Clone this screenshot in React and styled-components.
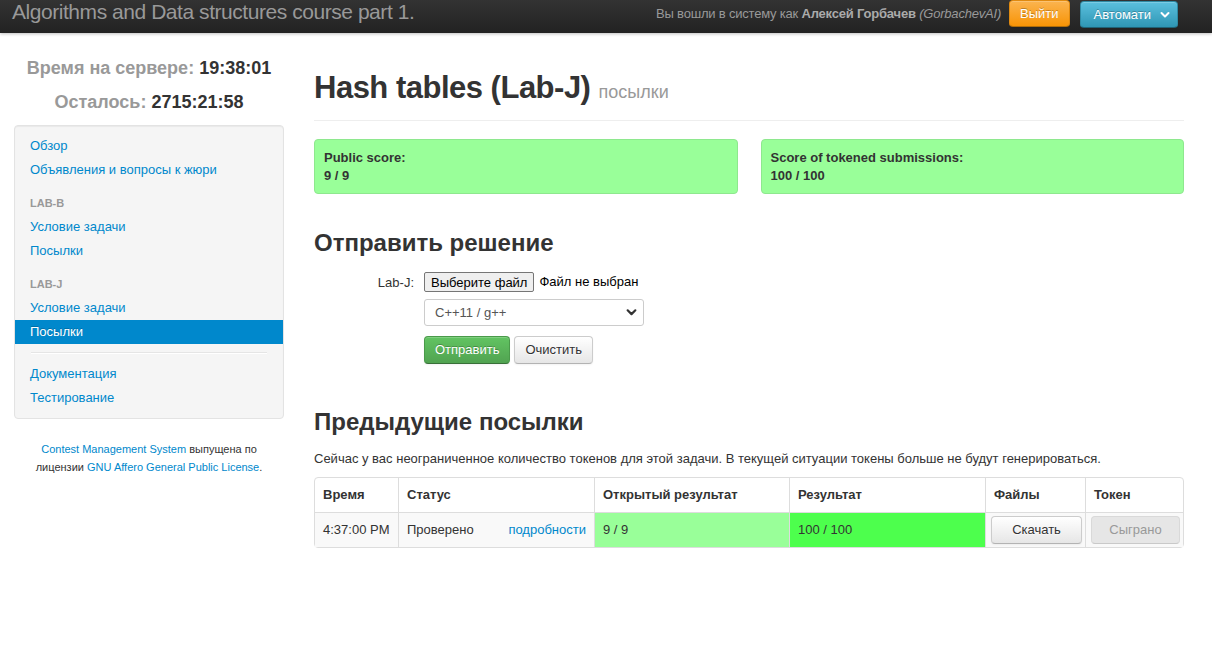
import styled, { createGlobalStyle, css } from "styled-components";

// Data
const menu = [
  { type: "link", name: "Обзор" },
  { type: "link", name: "Объявления и вопросы к жюри" },
  { type: "header", name: "LAB-B" },
  { type: "link", name: "Условие задачи" },
  { type: "link", name: "Посылки" },
  { type: "header", name: "LAB-J" },
  { type: "link", name: "Условие задачи" },
  { type: "link", name: "Посылки", active: true },
  { type: "divider" },
  { type: "link", name: "Документация" },
  { type: "link", name: "Тестирование" },
];

const columns = [
  { title: "Время", width: 83 },
  { title: "Статус", width: 196 },
  { title: "Открытый результат", width: 195 },
  { title: "Результат", width: 196 },
  { title: "Файлы", width: 100 },
  { title: "Токен", width: 98 },
];

// Icons
function Chevron({ color = "#fff", size = 10 }) {
  return (
    <svg width={size} height={size} viewBox="0 0 10 10">
      <polyline
        points="1.5,3 5,6.5 8.5,3"
        fill="none"
        stroke={color}
        strokeWidth="2"
        strokeLinecap="round"
        strokeLinejoin="round"
      />
    </svg>
  );
}

// Component
export default function App() {
  return (
    <>
      <GlobalStyle />
      <Navbar>
        <Brand>Algorithms and Data structures course part 1.</Brand>
        <NavRight>
          <NavText>
            Вы вошли в систему как <b>Алексей Горбачев</b> <i>(GorbachevAI)</i>
          </NavText>
          <Button variant="warning" $pad="0 10px" $h={27}>
            Выйти
          </Button>
          <Button variant="info" $pad="0 7px 0 13px" $h={27} $mt={1}>
            Автомати
            <Caret>
              <Chevron />
            </Caret>
          </Button>
        </NavRight>
      </Navbar>

      <Page>
        <Sidebar>
          <Clock>
            <div>
              Время на сервере: <strong>19:38:01</strong>
            </div>
            <div>
              Осталось: <strong>2715:21:58</strong>
            </div>
          </Clock>
          <Well>
            {menu.map((m, i) => {
              if (m.type === "divider") return <Divider key={i} />;
              if (m.type === "header")
                return <NavHeader key={i}>{m.name}</NavHeader>;
              return (
                <NavLink key={i} active={m.active}>
                  {m.name}
                </NavLink>
              );
            })}
          </Well>
          <Footer>
            <a>Contest Management System</a> выпущена по
            <br />
            лицензии <a>GNU Affero General Public License</a>.
          </Footer>
        </Sidebar>

        <Main>
          <PageHeader>
            <h1>
              Hash tables (Lab-J) <small>посылки</small>
            </h1>
          </PageHeader>

          <ScoreRow>
            <ScoreBox>
              Public score:
              <br />9 / 9
            </ScoreBox>
            <ScoreBox>
              Score of tokened submissions:
              <br />
              100 / 100
            </ScoreBox>
          </ScoreRow>

          <SectionTitle $mt={31}>Отправить решение</SectionTitle>

          <Form>
            <FormLabel>Lab-J:</FormLabel>
            <FileRow>
              <FileButton>Выберите файл</FileButton>
              <span>Файл не выбран</span>
            </FileRow>
            <FormSpacer />
            <Select>
              C++11 / g++
              <Chevron color="#333" size={11} />
            </Select>
            <FormSpacer />
            <Actions>
              <Button variant="success" $pad="0 10px" $h={28}>
                Отправить
              </Button>
              <Button $pad="0 10px" $h={28}>
                Очистить
              </Button>
            </Actions>
          </Form>

          <SectionTitle $mt={40}>Предыдущие посылки</SectionTitle>
          <Note>
            Сейчас у вас неограниченное количество токенов для этой задачи. В
            текущей ситуации токены больше не будут генерироваться.
          </Note>

          <Table>
            <colgroup>
              {columns.map((c) => (
                <col key={c.title} style={{ width: c.width }} />
              ))}
            </colgroup>
            <thead>
              <tr>
                {columns.map((c) => (
                  <th key={c.title}>{c.title}</th>
                ))}
              </tr>
            </thead>
            <tbody>
              <tr>
                <td>4:37:00 PM</td>
                <td>
                  <Status>
                    <span>Проверено</span>
                    <a>подробности</a>
                  </Status>
                </td>
                <ScoreCell tone="light">9 / 9</ScoreCell>
                <ScoreCell tone="bright">100 / 100</ScoreCell>
                <ButtonCell>
                  <Button $pad="0" $h={28} $block>
                    Скачать
                  </Button>
                </ButtonCell>
                <ButtonCell>
                  <Button variant="disabled" $pad="0" $h={28} $block>
                    Сыграно
                  </Button>
                </ButtonCell>
              </tr>
            </tbody>
          </Table>
        </Main>
      </Page>
    </>
  );
}

// Style
const GlobalStyle = createGlobalStyle`
  body {
    margin: 0;
    background: #fff;
    color: #333;
    font-family: "Liberation Sans", Arial, sans-serif;
    font-size: 13px;
    line-height: 18px;
  }
  a {
    color: #0088cc;
    text-decoration: none;
    cursor: pointer;
  }
`;

const Navbar = styled.header`
  height: 33px;
  display: flex;
  align-items: flex-start;
  padding: 0 34px 0 12px;
  background: linear-gradient(#333, #222);
  box-shadow: 0 1px 3px rgba(0, 0, 0, 0.25);
`;

const Brand = styled.div`
  font-size: 21px;
  line-height: 24px;
  letter-spacing: -0.45px;
  color: #999;
`;

const NavRight = styled.div`
  margin-left: auto;
  display: flex;
  align-items: flex-start;
  gap: 10px;
`;

const NavText = styled.div`
  color: #999;
  line-height: 28px;
  letter-spacing: -0.2px;
  margin-right: -2px;
  b {
    color: #aaa;
  }
`;

const variants = {
  default: css`
    color: #333;
    background: linear-gradient(#fff, #e6e6e6);
    border-color: #ccc #ccc #b3b3b3;
    text-shadow: 0 1px 1px rgba(255, 255, 255, 0.75);
  `,
  disabled: css`
    color: #999;
    background: #e6e6e6;
    border-color: #d9d9d9 #d9d9d9 #c9c9c9;
    box-shadow: none;
  `,
  success: css`
    color: #fff;
    background: linear-gradient(#62c462, #51a351);
    border-color: #4a9a4a #4a9a4a #387038;
    text-shadow: 0 -1px 0 rgba(0, 0, 0, 0.25);
  `,
  warning: css`
    color: #fff;
    background: linear-gradient(#fbb450, #f89406);
    border-color: #e08a10 #e08a10 #b06d0a;
    text-shadow: 0 -1px 0 rgba(0, 0, 0, 0.25);
  `,
  info: css`
    color: #fff;
    background: linear-gradient(#5bc0de, #2f96b4);
    border-color: #2f8aa4 #2f8aa4 #1f6377;
    text-shadow: 0 -1px 0 rgba(0, 0, 0, 0.25);
  `,
};

const Button = styled.button`
  box-sizing: border-box;
  display: ${(p) => (p.$block ? "flex" : "inline-flex")};
  width: ${(p) => (p.$block ? "100%" : "auto")};
  align-items: center;
  justify-content: center;
  height: ${(p) => p.$h}px;
  margin-top: ${(p) => p.$mt || 0}px;
  padding: ${(p) => p.$pad};
  font-family: inherit;
  font-size: 13px;
  line-height: 18px;
  border: 1px solid;
  border-radius: 4px;
  box-shadow: inset 0 1px 0 rgba(255, 255, 255, 0.2),
    0 1px 2px rgba(0, 0, 0, 0.05);
  cursor: pointer;
  ${(p) => variants[p.variant || "default"]}
`;

const Caret = styled.span`
  display: inline-flex;
  margin-left: 9px;
`;

const Page = styled.div`
  display: flex;
  gap: 30px;
  padding: 0 28px 40px 14px;
`;

const Sidebar = styled.aside`
  width: 270px;
  flex: none;
  padding-top: 18px;
`;

const Clock = styled.div`
  text-align: center;
  font-size: 18px;
  font-weight: bold;
  line-height: 34px;
  color: #999;
  strong {
    color: #333;
  }
`;

const Well = styled.nav`
  margin-top: 6px;
  padding: 8px 15px;
  background: #f5f5f5;
  border: 1px solid #e3e3e3;
  border-radius: 4px;
  box-shadow: inset 0 1px 1px rgba(0, 0, 0, 0.05);
`;

const NavLink = styled.a`
  display: block;
  margin: 0 -15px;
  padding: 3px 15px;
  line-height: 18px;
  color: #0088cc;
  ${(p) =>
    p.active &&
    css`
      color: #fff;
      background: #0088cc;
      text-shadow: 0 -1px 0 rgba(0, 0, 0, 0.2);
    `}
`;

const NavHeader = styled.div`
  margin: 9px -15px 0;
  padding: 3px 15px;
  font-size: 11px;
  font-weight: bold;
  line-height: 18px;
  color: #999;
  text-transform: uppercase;
`;

const Divider = styled.div`
  height: 1px;
  margin: 8px 1px;
  background: #e5e5e5;
  border-bottom: 1px solid #fff;
`;

const Footer = styled.p`
  margin: 21px 0 0;
  text-align: center;
  font-size: 11px;
  line-height: 18px;
`;

const Main = styled.main`
  flex: 1;
  min-width: 0;
`;

const PageHeader = styled.div`
  margin-top: 35px;
  padding-bottom: 8px;
  border-bottom: 1px solid #eee;
  margin-bottom: 18px;
  h1 {
    margin: 0;
    font-size: 31px;
    line-height: 40px;
    letter-spacing: -0.5px;
    font-weight: bold;
    color: #333;
  }
  small {
    font-size: 18px;
    font-weight: normal;
    letter-spacing: 0;
    color: #999;
  }
`;

const ScoreRow = styled.div`
  display: grid;
  grid-template-columns: 1fr 1fr;
  gap: 23px;
`;

const ScoreBox = styled.div`
  padding: 9px 9px 8px;
  background: #99ff99;
  border: 1px solid #8ee88e;
  border-radius: 4px;
  font-weight: bold;
  line-height: 18px;
`;

const SectionTitle = styled.h2`
  margin: ${(p) => p.$mt}px 0 0;
  font-size: 24px;
  line-height: 36px;
  font-weight: bold;
  color: #333;
`;

const Form = styled.div`
  display: grid;
  grid-template-columns: 100px 1fr;
  column-gap: 10px;
  margin-top: 11px;
`;

const FormLabel = styled.label`
  text-align: right;
  line-height: 20px;
  padding-top: 1px;
`;

const FormSpacer = styled.div``;

const FileRow = styled.div`
  display: flex;
  align-items: center;
  gap: 5px;
  height: 20px;
  color: #000;
`;

const FileButton = styled.button`
  box-sizing: border-box;
  height: 20px;
  padding: 0 6px;
  font-family: inherit;
  font-size: 13px;
  color: #000;
  background: #efefef;
  border: 1px solid #767676;
  border-radius: 2px;
`;

const Select = styled.div`
  box-sizing: border-box;
  width: 220px;
  height: 27px;
  margin-top: 6px;
  padding: 0 6px 0 10px;
  display: flex;
  align-items: center;
  justify-content: space-between;
  border: 1px solid #ccc;
  border-radius: 3px;
  color: #555;
  background: #fff;
`;

const Actions = styled.div`
  display: flex;
  gap: 4px;
  margin-top: 10px;
`;

const Note = styled.p`
  margin: 10px 0 9px;
`;

const Table = styled.table`
  width: 100%;
  table-layout: fixed;
  border-collapse: separate;
  border-spacing: 0;
  border: 1px solid #ddd;
  border-radius: 4px;
  th,
  td {
    box-sizing: border-box;
    padding: 8px;
    line-height: 18px;
    text-align: left;
    border-left: 1px solid #ddd;
  }
  th:first-child,
  td:first-child {
    border-left: 0;
  }
  th {
    font-weight: bold;
  }
  td {
    border-top: 1px solid #ddd;
    background: #f9f9f9;
  }
`;

const Status = styled.div`
  display: flex;
  justify-content: space-between;
`;

const ScoreCell = styled.td`
  && {
    background: ${(p) => (p.tone === "bright" ? "#4dff4d" : "#99ff99")};
  }
`;

const ButtonCell = styled.td`
  && {
    padding: 3px 3px 3px 5px;
  }
`;
